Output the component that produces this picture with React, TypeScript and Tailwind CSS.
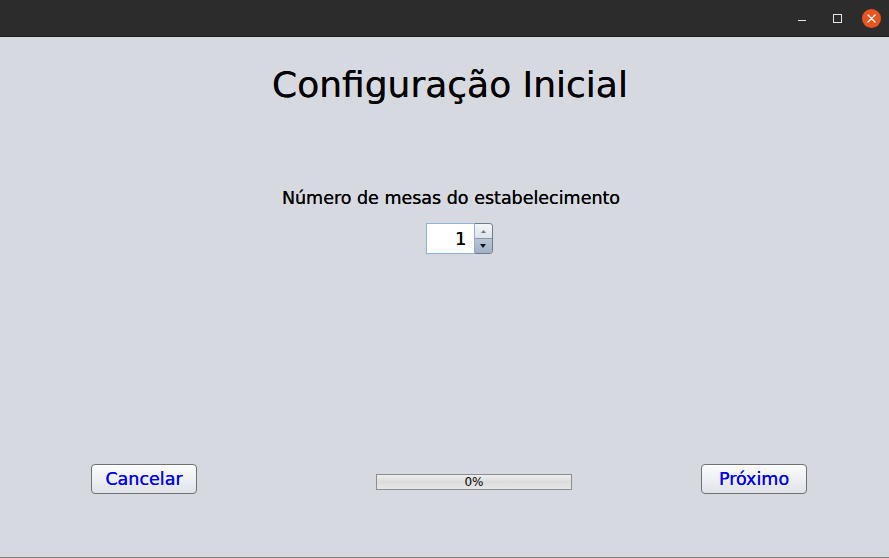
import React, { useState } from 'react';

const font = { fontFamily: '"DejaVu Sans", "Liberation Sans", sans-serif' };

const TitleBar: React.FC = () => (
  <div className="h-[37px] bg-[#2c2c2c] border-b border-[#1b1b1b] flex items-center justify-end pr-[3px]">
    <div className="w-[32px] h-[36px] flex items-center justify-center">
      <div className="w-[8px] h-[1px] bg-[#e6e6e6] mt-[5px]" />
    </div>
    <div className="w-[38px] h-[36px] flex items-center justify-center">
      <div className="w-[9px] h-[9px] border border-[#e6e6e6]" />
    </div>
    <div className="w-[30px] h-[36px] flex items-center justify-center">
      <div className="w-[19px] h-[19px] rounded-full bg-[#e95420] flex items-center justify-center">
        <svg width="9" height="9" viewBox="0 0 9 9">
          <path d="M1 1 L8 8 M8 1 L1 8" stroke="#fff" strokeWidth="1.4" strokeLinecap="round" />
        </svg>
      </div>
    </div>
  </div>
);

const Spinner: React.FC = () => {
  const [value, setValue] = useState(1);
  return (
    <div className="flex h-[31px]">
      <div className="w-[49px] h-full bg-white border border-[#8fb3da] flex items-center justify-end pr-[7px] text-[18px] text-black [text-shadow:0_0_0.5px_#000]">
        {value}
      </div>
      <div className="w-[18px] h-full flex flex-col rounded-r-[4px] overflow-hidden border border-l-0 border-[#6d7c8c]">
        <button
          onClick={() => setValue(value + 1)}
          className="flex-1 bg-gradient-to-b from-[#f4f6f9] to-[#dde3ea] flex items-center justify-center border-b border-[#8896a5]"
        >
          <svg width="5" height="3" viewBox="0 0 5 3"><path d="M0 3 L2.5 0 L5 3 Z" fill="#6c7580" /></svg>
        </button>
        <button
          onClick={() => setValue(Math.max(1, value - 1))}
          className="flex-1 bg-gradient-to-b from-[#b9c7d6] to-[#9fb1c4] flex items-center justify-center"
        >
          <svg width="6" height="4" viewBox="0 0 6 4"><path d="M0 0 L6 0 L3 4 Z" fill="#101418" /></svg>
        </button>
      </div>
    </div>
  );
};

const NavButton: React.FC<{ label: string }> = ({ label }) => (
  <button className="w-[106px] h-[30px] rounded-[4px] border border-[#6e7177] bg-gradient-to-b from-[#fbfbfc] via-[#eef0f4] to-[#dfe2e8] text-[#0000ff] text-[17.5px] flex items-center justify-center shadow-[inset_0_1px_0_#ffffff] [text-shadow:0_0_0.4px_#0000ff]">
    {label}
  </button>
);

export default function App() {
  return (
    <div className="w-[889px] h-[558px] bg-[#d6d9e0] flex flex-col overflow-hidden" style={font}>
      <TitleBar />
      <div className="flex-1 flex flex-col items-center border-b border-[#7f7f7f] pl-[11px]">
        <h1 className="mt-[27px] text-[36px] leading-[42px] text-black [text-shadow:0_0_0.5px_#000]">Configuração Inicial</h1>
        <div className="mt-[81px] text-[17.5px] leading-[22px] text-black pl-[2px] [text-shadow:0_0_0.4px_#000]">
          Número de mesas do estabelecimento
        </div>
        <div className="mt-[14px] pl-[18px]">
          <Spinner />
        </div>
        <div className="flex-1" />
        <div className="w-full flex items-start pl-[80px] mb-[63px]">
          <NavButton label="Cancelar" />
          <div className="ml-[179px] mt-[10px] w-[196px] h-[16px] border border-[#8a8d92] bg-gradient-to-b from-[#eeeeee] via-[#dcdcdc] to-[#e8e8e8] flex items-center justify-center text-[12px] text-black leading-none">
            0%
          </div>
          <div className="ml-[129px]">
            <NavButton label="Próximo" />
          </div>
        </div>
      </div>
    </div>
  );
}
